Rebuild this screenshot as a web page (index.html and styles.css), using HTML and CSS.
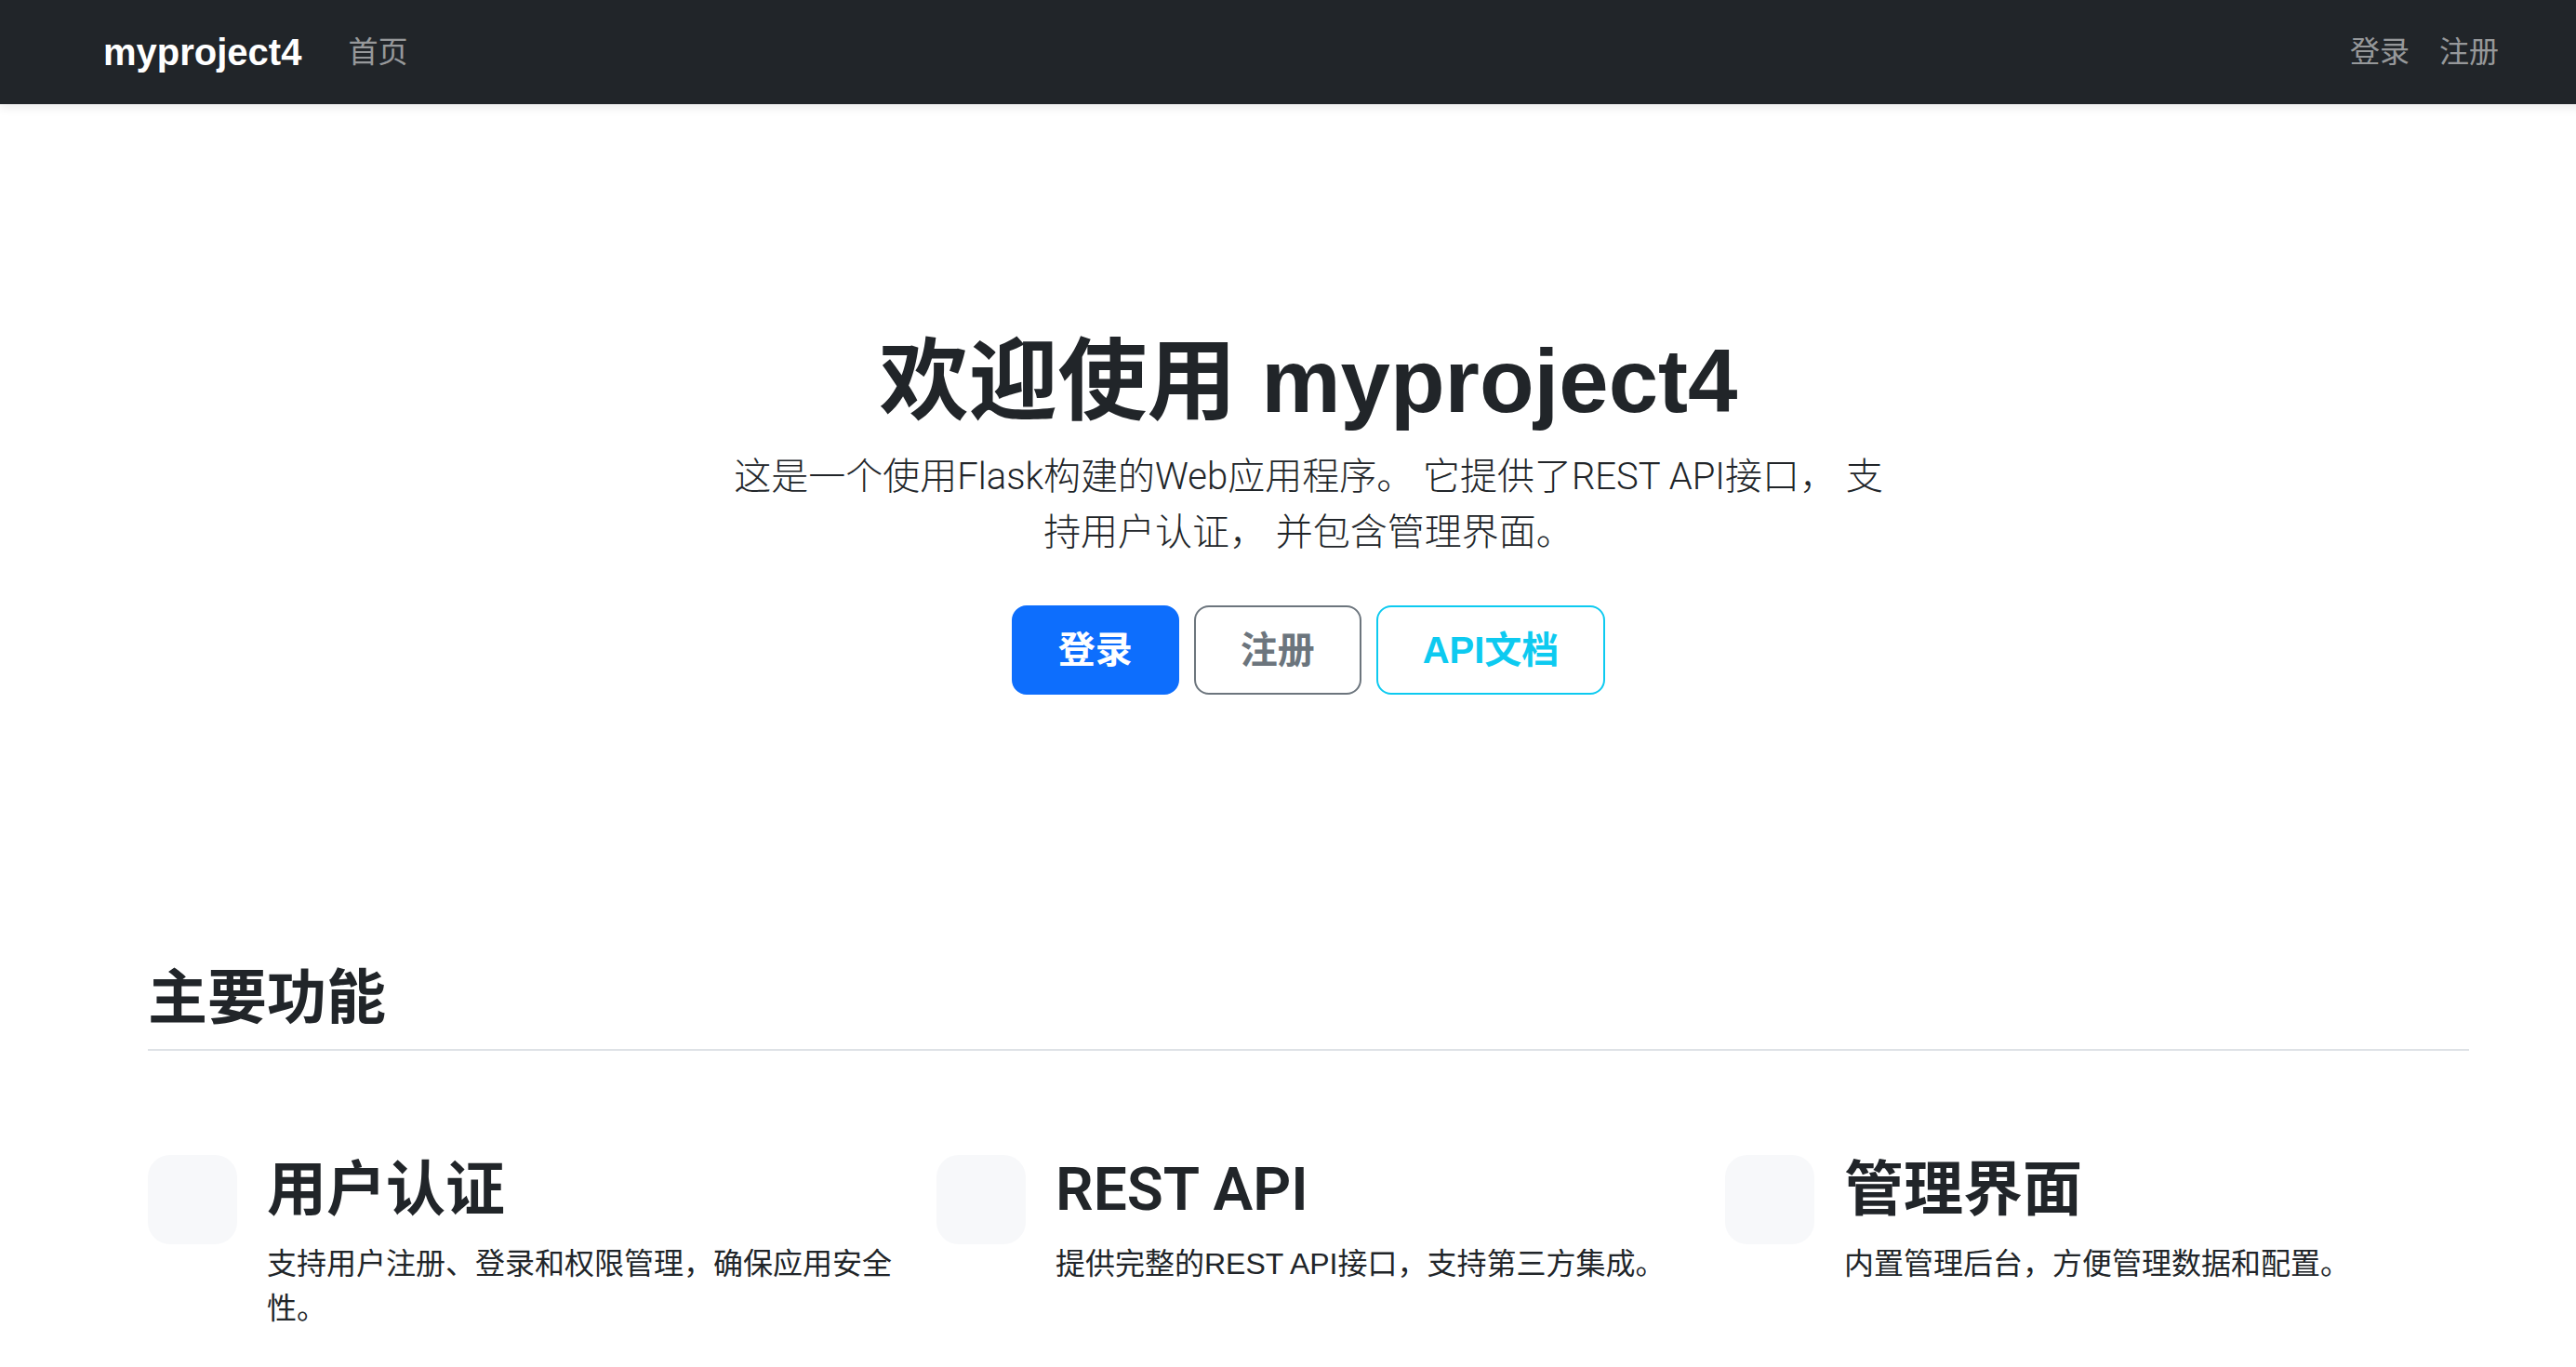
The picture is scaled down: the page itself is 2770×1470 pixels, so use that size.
FILE: index.html
```html
<!DOCTYPE html>
<html lang="zh-CN">
<head>
<meta charset="utf-8">
<title>myproject4</title>
<link rel="stylesheet" href="styles.css">
</head>
<body>
<div class="page">
  <nav class="navbar">
    <div class="nav-container">
      <div class="nav-left">
        <a class="brand" href="#">myproject4</a>
        <a class="nav-link" href="#">首页</a>
      </div>
      <div class="nav-right">
        <a class="nav-link" href="#">登录</a>
        <a class="nav-link" href="#">注册</a>
      </div>
    </div>
  </nav>

  <section class="hero">
    <h1 class="hero-title">欢迎使用 myproject4</h1>
    <p class="lead">这是一个使用Flask构建的Web应用程序。 它提供了REST API接口， 支持用户认证， 并包含管理界面。</p>
    <div class="hero-buttons">
      <a class="btn btn-primary" href="#">登录</a>
      <a class="btn btn-outline-secondary" href="#">注册</a>
      <a class="btn btn-outline-info" href="#">API文档</a>
    </div>
  </section>

  <section class="features">
    <h2 class="features-title">主要功能</h2>
    <div class="feature-row">
      <div class="feature">
        <div class="icon-square"></div>
        <div class="feature-body">
          <h3 class="feature-title">用户认证</h3>
          <p class="feature-text">支持用户注册、登录和权限管理，确保应用安全性。</p>
        </div>
      </div>
      <div class="feature">
        <div class="icon-square"></div>
        <div class="feature-body">
          <h3 class="feature-title">REST API</h3>
          <p class="feature-text">提供完整的REST API接口，支持第三方集成。</p>
        </div>
      </div>
      <div class="feature">
        <div class="icon-square"></div>
        <div class="feature-body">
          <h3 class="feature-title">管理界面</h3>
          <p class="feature-text">内置管理后台，方便管理数据和配置。</p>
        </div>
      </div>
    </div>
  </section>
</div>
</body>
</html>
```

FILE: styles.css
```css
html, body {
  margin: 0;
  padding: 0;
  overflow: hidden;
}

body {
  font-family: "Liberation Sans", "Noto Sans CJK SC", sans-serif;
  font-size: 32px;
  line-height: 1.5;
  color: #212529;
  background: #fff;
}

a {
  text-decoration: none;
}

.page {
  width: 2814px;
}

/* Navbar */
.navbar {
  position: relative;
  z-index: 2;
  background: #212529;
  padding: 16px 0;
  box-shadow: 0 4px 10px rgba(0, 0, 0, 0.08);
}

.nav-container {
  width: 2640px;
  margin: 0 auto;
  padding: 0 24px;
  box-sizing: border-box;
  display: flex;
  align-items: center;
  justify-content: space-between;
}

.nav-left,
.nav-right {
  display: flex;
  align-items: center;
}

.brand {
  font-size: 40px;
  font-weight: 700;
  line-height: 60px;
  padding: 10px 0;
  margin-right: 34px;
  color: #fff;
}

.nav-link {
  font-size: 32px;
  line-height: 48px;
  padding: 16px;
  color: rgba(255, 255, 255, 0.55);
}

/* Hero */
.hero {
  padding: 240px 48px 192px;
  text-align: center;
}

.hero-title {
  margin: 0 0 16px;
  font-size: 96px;
  font-weight: 700;
  line-height: 1.2;
  color: #212529;
}

.lead {
  max-width: 1248px;
  margin: 0 auto 48px;
  font-family: "Roboto", "Noto Sans CJK SC", sans-serif;
  font-size: 40px;
  font-weight: 300;
  line-height: 60px;
}

.hero-buttons {
  display: flex;
  justify-content: center;
  gap: 16px;
}

.btn {
  display: inline-block;
  font-size: 40px;
  font-weight: 600;
  line-height: 60px;
  padding: 16px 48px;
  border: 2px solid transparent;
  border-radius: 16px;
}

.btn-primary {
  background: #0d6efd;
  border-color: #0d6efd;
  color: #fff;
}

.btn-outline-secondary {
  border-color: #6c757d;
  color: #6c757d;
}

.btn-outline-info {
  border-color: #0dcaf0;
  color: #0dcaf0;
}

/* Features */
.features {
  width: 2640px;
  margin: 0 auto;
  padding: 96px 72px;
  box-sizing: border-box;
}

.features-title {
  margin: 0 0 16px;
  padding-bottom: 16px;
  font-size: 64px;
  font-weight: 600;
  line-height: 1.2;
  border-bottom: 2px solid #dee2e6;
}

.feature-row {
  display: grid;
  grid-template-columns: repeat(3, 1fr);
  column-gap: 48px;
  padding-top: 96px;
}

.feature {
  display: flex;
  align-items: flex-start;
}

.icon-square {
  flex-shrink: 0;
  width: 96px;
  height: 96px;
  margin-right: 32px;
  border-radius: 24px;
  background: #f7f8fa;
}

.feature-title {
  margin: 0 0 16px;
  font-family: "Roboto", "Noto Sans CJK SC", sans-serif;
  font-size: 64px;
  font-weight: 600;
  line-height: 1.2;
}

.feature-text {
  margin: 0 0 32px;
  font-size: 32px;
  line-height: 48px;
}
```
